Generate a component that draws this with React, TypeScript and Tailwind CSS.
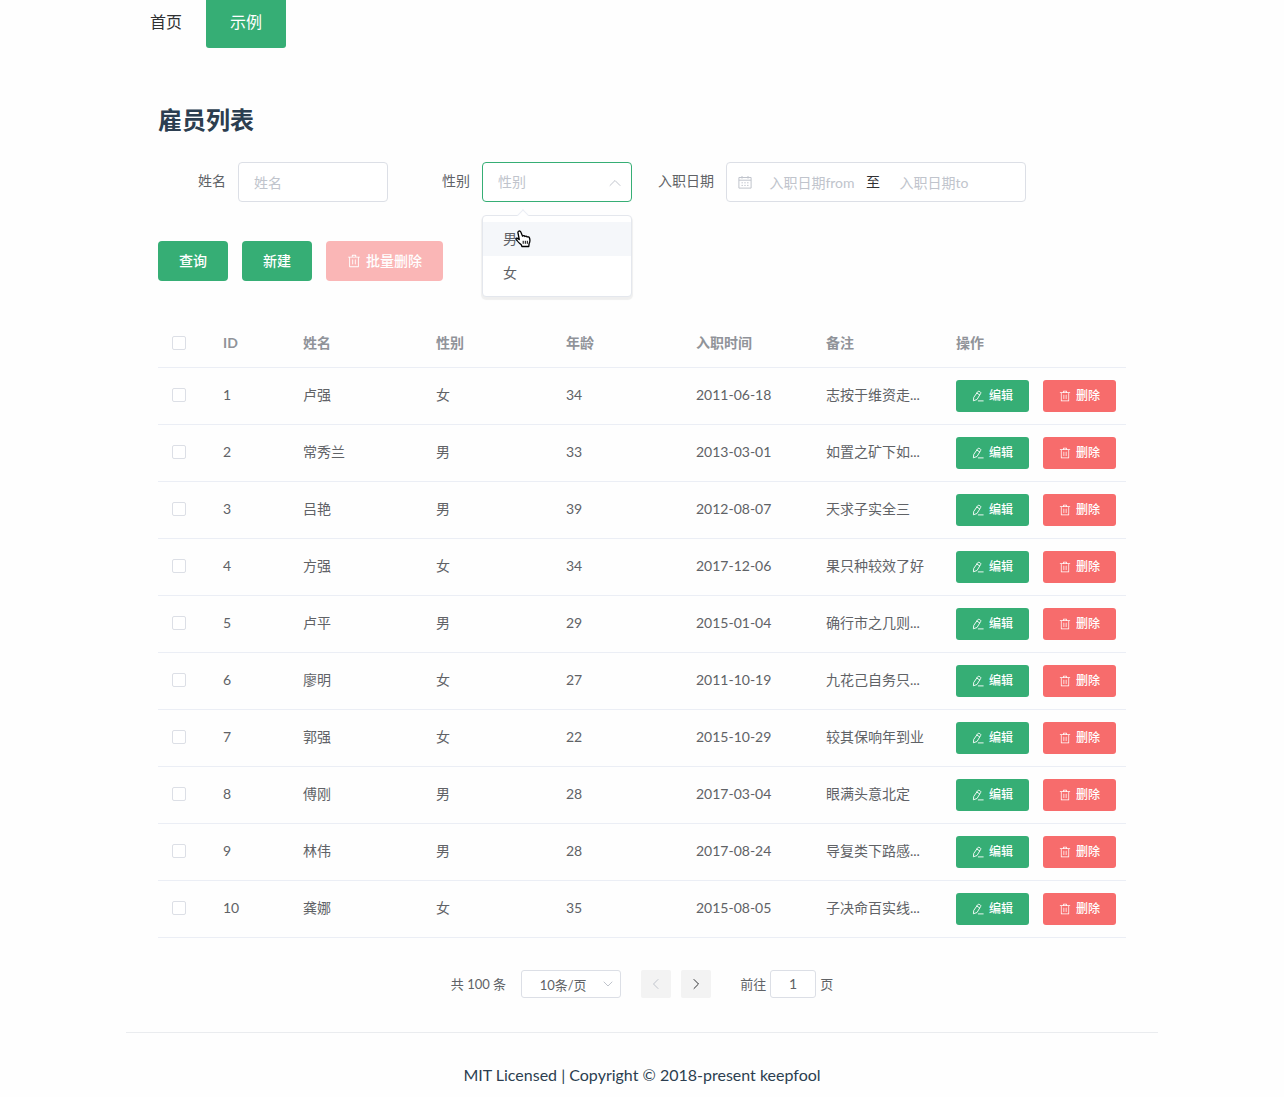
import { useState } from "react";

type Employee = {
  id: number;
  name: string;
  gender: string;
  age: number;
  date: string;
  remark: string;
};

const employees: Employee[] = [
  { id: 1, name: "卢强", gender: "女", age: 34, date: "2011-06-18", remark: "志按于维资走..." },
  { id: 2, name: "常秀兰", gender: "男", age: 33, date: "2013-03-01", remark: "如置之矿下如..." },
  { id: 3, name: "吕艳", gender: "男", age: 39, date: "2012-08-07", remark: "天求子实全三" },
  { id: 4, name: "方强", gender: "女", age: 34, date: "2017-12-06", remark: "果只种较效了好" },
  { id: 5, name: "卢平", gender: "男", age: 29, date: "2015-01-04", remark: "确行市之几则..." },
  { id: 6, name: "廖明", gender: "女", age: 27, date: "2011-10-19", remark: "九花己自务只..." },
  { id: 7, name: "郭强", gender: "女", age: 22, date: "2015-10-29", remark: "较其保响年到业" },
  { id: 8, name: "傅刚", gender: "男", age: 28, date: "2017-03-04", remark: "眼满头意北定" },
  { id: 9, name: "林伟", gender: "男", age: 28, date: "2017-08-24", remark: "导复类下路感..." },
  { id: 10, name: "龚娜", gender: "女", age: 35, date: "2015-08-05", remark: "子决命百实线..." },
];

function TrashIcon({ className }: { className: string }) {
  return (
    <svg viewBox="0 0 1024 1024" fill="currentColor" className={className} aria-hidden="true">
      <path d="M160 256H96a32 32 0 0 1 0-64h256V95.936a32 32 0 0 1 32-32h256a32 32 0 0 1 32 32V192h256a32 32 0 1 1 0 64h-64v672a32 32 0 0 1-32 32H192a32 32 0 0 1-32-32V256zm448-64v-64H416v64h192zM224 896h576V256H224v640zm192-128a32 32 0 0 1-32-32V416a32 32 0 0 1 64 0v320a32 32 0 0 1-32 32zm192 0a32 32 0 0 1-32-32V416a32 32 0 0 1 64 0v320a32 32 0 0 1-32 32z" />
    </svg>
  );
}

function EditIcon() {
  return (
    <svg
      viewBox="0 0 12 12"
      fill="none"
      stroke="currentColor"
      strokeWidth="0.9"
      strokeLinejoin="round"
      strokeLinecap="round"
      className="size-3"
      aria-hidden="true"
    >
      <path d="M5.700 1.700Q6.200 .8 7.100 1.300L8.400 2.100Q9.200 2.600 8.700 3.400L5 9.500 1.400 10.800 1.700 7.800Z M4.900 3.100 7.700 4.900 M6.300 10.900h4.900" />
    </svg>
  );
}

function CalendarIcon() {
  return (
    <svg viewBox="0 0 14 14" fill="none" stroke="currentColor" strokeWidth="1" className="size-3.5" aria-hidden="true">
      <path d="M.9 2.5h12.2v10.6H.9Z M.9 5.2h12.2 M4 1v2.6 M10 1v2.6" strokeLinejoin="round" />
      <path d="M3.5 7.8h1.4 M6.3 7.8h1.4 M9.1 7.8h1.4 M3.5 10.4h1.4 M6.3 10.4h1.4 M9.1 10.4h1.4" />
    </svg>
  );
}

function Chevron({ d, className }: { d: string; className: string }) {
  return (
    <svg
      viewBox="0 0 12 12"
      fill="none"
      stroke="currentColor"
      strokeLinecap="round"
      strokeLinejoin="round"
      className={className}
      aria-hidden="true"
    >
      <path d={d} />
    </svg>
  );
}

function HandCursor() {
  return (
    <svg
      viewBox="0 0 16 18"
      className="pointer-events-none absolute top-[14px] left-8 h-[18px] w-4"
      fill="#fff"
      stroke="#000"
      strokeWidth="1.3"
      strokeLinejoin="round"
      aria-hidden="true"
    >
      <path d="M3.6 1.2C4.500.7 5.400 1.100 5.800 2L7.600 6.200C8 5.500 9.500 5.500 9.900 6.500C10.500 5.900 11.800 6 12.100 7C13 6.500 14.200 7 14.500 8C15.300 10.500 14.900 12.200 14.100 13.600L13.800 16.500H6.900L6.400 15C5 13.500 3.500 12.800 2.700 11.300C2.200 10.300 .6 9.600 .8 8.700C1.200 7.700 2.800 8.200 4.300 9.600L3 3C2.800 2.200 2.900 1.600 3.600 1.200Z" />
      <path d="M8.200 10.800v3 M10.300 10.800v3 M12.300 10.800v3" strokeWidth="1" fill="none" />
    </svg>
  );
}

const checkbox =
  "block size-3.5 appearance-none rounded-[2px] border border-[#dcdfe6] bg-white checked:border-[#36ae75] checked:bg-[#36ae75]";
const rowButton =
  "flex h-8 items-center gap-[5px] rounded-[3px] px-4 text-xs font-medium text-white whitespace-nowrap";

const columns = ["ID", "姓名", "性别", "年龄", "入职时间", "备注", "操作"];

export default function App() {
  const [gender, setGender] = useState("");
  const [open, setOpen] = useState(true);
  const [selected, setSelected] = useState<number[]>([]);
  const toggle = (id: number) =>
    setSelected((s) => (s.includes(id) ? s.filter((x) => x !== id) : [...s, id]));

  return (
    <div className="bg-[#fefefe] font-['Lato','Noto_Sans_CJK_SC',sans-serif] text-sm text-[#606266]">
      <div className="mx-auto max-w-[1032px]">
        <nav className="flex text-base text-[#303133]">
          <a href="#home" className="h-12 px-6 leading-[44px]">
            首页
          </a>
          <a href="#demo" className="h-12 rounded-b-[3px] bg-[#36ae75] px-6 leading-[44px] text-white">
            示例
          </a>
        </nav>

        <main className="px-8 pt-14">
          <h1 className="text-2xl leading-8 font-bold text-[#2c3e50]">雇员列表</h1>

          <form className="mt-[26px]" onSubmit={(e) => e.preventDefault()}>
            <div className="flex flex-wrap gap-x-3.5 gap-y-4">
              <div className="flex">
                <label htmlFor="name" className="w-20 pr-3 text-right leading-[38px]">
                  姓名
                </label>
                <input
                  id="name"
                  placeholder="姓名"
                  className="h-10 w-[150px] rounded border border-[#dcdfe6] bg-white px-[15px] outline-none placeholder:text-[#c0c4cc]"
                />
              </div>

              <div className="flex">
                <label htmlFor="gender" className="w-20 pr-3 text-right leading-[38px]">
                  性别
                </label>
                <div className="relative">
                  <select
                    id="gender"
                    value={gender}
                    onChange={(e) => setGender(e.target.value)}
                    onMouseDown={(e) => {
                      e.preventDefault();
                      setOpen(!open);
                    }}
                    className="h-10 w-[150px] appearance-none rounded border border-[#36ae75] bg-white px-[15px] text-[#c0c4cc] outline-none"
                  >
                    <option value="">性别</option>
                    <option value="男">男</option>
                    <option value="女">女</option>
                  </select>
                  <Chevron
                    d="M1 8.500 6 3.500l5 5"
                    className="pointer-events-none absolute top-[15px] right-[11px] size-3 text-[#c0c4cc]"
                  />
                  {open && (
                    <div className="absolute top-[53px] left-0 z-10 w-full rounded border border-[#e4e7ed] bg-white py-1.5 shadow-[0_2px_1px_1px_rgba(0,0,0,0.06)]">
                      <div className="absolute -top-[5px] left-9 size-2 rotate-45 border-t border-l border-[#ebeef5] bg-white" />
                      <ul role="listbox" aria-label="性别">
                        {["男", "女"].map((g) => (
                          <li
                            key={g}
                            role="option"
                            aria-selected={gender === g}
                            onClick={() => {
                              setGender(g);
                              setOpen(false);
                            }}
                            className="h-[34px] cursor-pointer px-5 leading-[34px] first:bg-[#f5f7fa]"
                          >
                            {g}
                          </li>
                        ))}
                      </ul>
                      <HandCursor />
                    </div>
                  )}
                </div>
              </div>

              <div className="flex">
                <label htmlFor="from" className="w-20 pr-3 text-right leading-[38px]">
                  入职日期
                </label>
                <div className="flex h-10 w-[300px] items-center rounded border border-[#dcdfe6] bg-white px-[11px] text-[#c0c4cc]">
                  <div className="w-5">
                    <CalendarIcon />
                  </div>
                  <input
                    id="from"
                    placeholder="入职日期from"
                    className="h-full w-[108px] text-center outline-none placeholder:text-[#c0c4cc]"
                  />
                  <span className="leading-[38px] text-[#303133]">至</span>
                  <input
                    aria-label="入职日期to"
                    placeholder="入职日期to"
                    className="h-full w-[108px] text-center outline-none placeholder:text-[#c0c4cc]"
                  />
                </div>
              </div>
            </div>

            <div className="mt-[39px] flex gap-3.5 font-medium text-white">
              <button type="submit" className="h-10 rounded bg-[#36ae75] px-[21px]">
                查询
              </button>
              <button type="button" className="h-10 rounded bg-[#36ae75] px-[21px]">
                新建
              </button>
              <button
                type="button"
                disabled={selected.length === 0}
                className="flex h-10 items-center gap-[5px] rounded bg-[#f76c6c] px-[21px] disabled:bg-[#fab6b6]"
              >
                <TrashIcon className="size-3.5" />
                批量删除
              </button>
            </div>
          </form>

          <table className="mt-[38px] w-full table-fixed text-left">
            <colgroup>
              <col className="w-[55px]" />
              <col className="w-20" />
              <col />
              <col className="w-[130px]" />
              <col className="w-[130px]" />
              <col className="w-[130px]" />
              <col className="w-[130px]" />
              <col className="w-[180px]" />
            </colgroup>
            <thead>
              <tr className="h-12 border-b border-[#ebeef5] text-[#909399]">
                <th className="pl-3.5">
                  <input
                    type="checkbox"
                    aria-label="全选"
                    checked={selected.length === employees.length}
                    onChange={() =>
                      setSelected(selected.length === employees.length ? [] : employees.map((e) => e.id))
                    }
                    className={checkbox}
                  />
                </th>
                {columns.map((c) => (
                  <th key={c} className="px-2.5 font-bold">
                    {c}
                  </th>
                ))}
              </tr>
            </thead>
            <tbody>
              {employees.map((e) => (
                <tr key={e.id} className="h-[57px] border-b border-[#ebeef5]">
                  <td className="pb-0.5 pl-3.5">
                    <input
                      type="checkbox"
                      aria-label={`选择 ${e.name}`}
                      checked={selected.includes(e.id)}
                      onChange={() => toggle(e.id)}
                      className={checkbox}
                    />
                  </td>
                  <td className="px-2.5 pb-0.5">{e.id}</td>
                  <td className="px-2.5 pb-0.5">{e.name}</td>
                  <td className="px-2.5 pb-0.5">{e.gender}</td>
                  <td className="px-2.5 pb-0.5">{e.age}</td>
                  <td className="px-2.5 pb-0.5">{e.date}</td>
                  <td className="px-2.5 pb-0.5 whitespace-nowrap">{e.remark}</td>
                  <td className="px-2.5">
                    <div className="flex gap-3.5">
                      <button type="button" className={`${rowButton} bg-[#36ae75]`}>
                        <EditIcon />
                        编辑
                      </button>
                      <button type="button" className={`${rowButton} bg-[#f76c6c]`}>
                        <TrashIcon className="size-3" />
                        删除
                      </button>
                    </div>
                  </td>
                </tr>
              ))}
            </tbody>
          </table>

          <div className="mt-8 flex justify-center text-[13px] leading-7">
            <span className="mr-[15px]">共 100 条</span>
            <div className="relative mr-5">
              <select
                aria-label="每页条数"
                className="block h-7 w-[100px] appearance-none rounded-[3px] border border-[#dcdfe6] bg-white pr-6 pl-2 text-center outline-none"
              >
                <option>10条/页</option>
                <option>20条/页</option>
                <option>50条/页</option>
              </select>
              <Chevron
                d="M2 4l4 4 4-4"
                className="pointer-events-none absolute top-2 right-[7px] size-3 text-[#c0c4cc]"
              />
            </div>
            <button
              type="button"
              disabled
              aria-label="上一页"
              className="mr-2.5 flex h-7 w-[30px] items-center justify-center rounded-[2px] bg-[#f3f3f3] text-[#c0c4cc]"
            >
              <Chevron d="M8 1.500 3.500 6 8 10.500" className="size-3" />
            </button>
            <button
              type="button"
              aria-label="下一页"
              className="mr-[29px] flex h-7 w-[30px] items-center justify-center rounded-[2px] bg-[#f3f3f3] text-[#303133]"
            >
              <Chevron d="M4 1.500 8.500 6 4 10.500" className="size-3" />
            </button>
            <div className="flex gap-1">
              <label htmlFor="page">前往</label>
              <input
                id="page"
                defaultValue="1"
                className="h-7 w-[46px] rounded-[3px] border border-[#dcdfe6] bg-white text-center text-sm outline-none"
              />
              <span>页</span>
            </div>
          </div>
        </main>

        <footer className="mt-[34px] border-t border-[#eaecef] pt-[30px] pb-3 text-center text-base leading-6 text-[#2c3e50]">
          MIT Licensed | Copyright © 2018-present keepfool
        </footer>
      </div>
    </div>
  );
}
